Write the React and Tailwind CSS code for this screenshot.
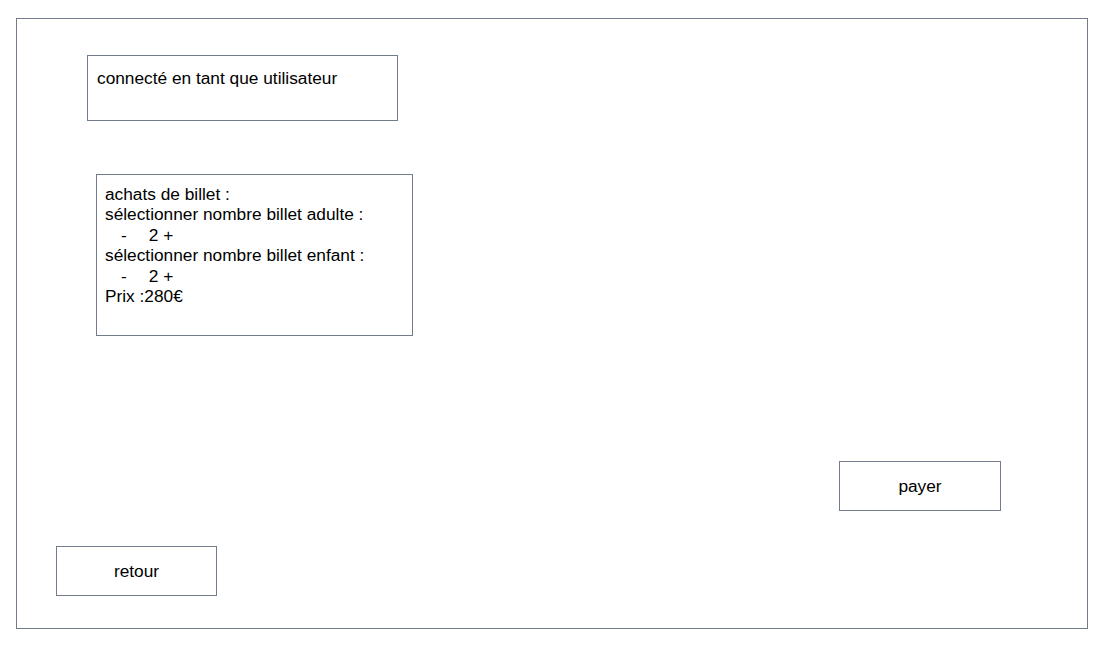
import React from 'react';

const box = 'border border-[#737c8c] bg-white';

const App = () => {
    return (
        <div className="w-[1106px] h-[648px] bg-white pt-[18px] pl-[16px] text-[17.3px] leading-[20.4px] text-black" style={{ fontFamily: '"Liberation Sans", Arial, sans-serif' }}>
            <div className={`${box} w-[1072px] h-[611px] flex flex-col items-start`}>
                {/* user banner */}
                <div className={`${box} ml-[70px] mt-[36px] w-[311px] h-[66px] pt-[12px] pl-[9px]`}>
                    connecté en tant que utilisateur
                </div>

                {/* ticket purchase */}
                <div className={`${box} ml-[79px] mt-[53px] w-[317px] h-[162px] pt-[9px] pl-[8px]`}>
                    <p>achats de billet :</p>
                    <p>sélectionner nombre billet adulte :</p>
                    <p className="pl-[16px]">
                        <span>-</span>
                        <span className="ml-[22px]">2 +</span>
                    </p>
                    <p>sélectionner nombre billet enfant :</p>
                    <p className="pl-[16px]">
                        <span>-</span>
                        <span className="ml-[22px]">2 +</span>
                    </p>
                    <p>Prix :280€</p>
                </div>

                <button className={`${box} ml-[822px] mt-[125px] w-[162px] h-[50px] flex items-center justify-center`}>
                    payer
                </button>

                <button className={`${box} ml-[39px] mt-[35px] w-[161px] h-[50px] flex items-center justify-center`}>
                    retour
                </button>
            </div>
        </div>
    );
};

export default App;
